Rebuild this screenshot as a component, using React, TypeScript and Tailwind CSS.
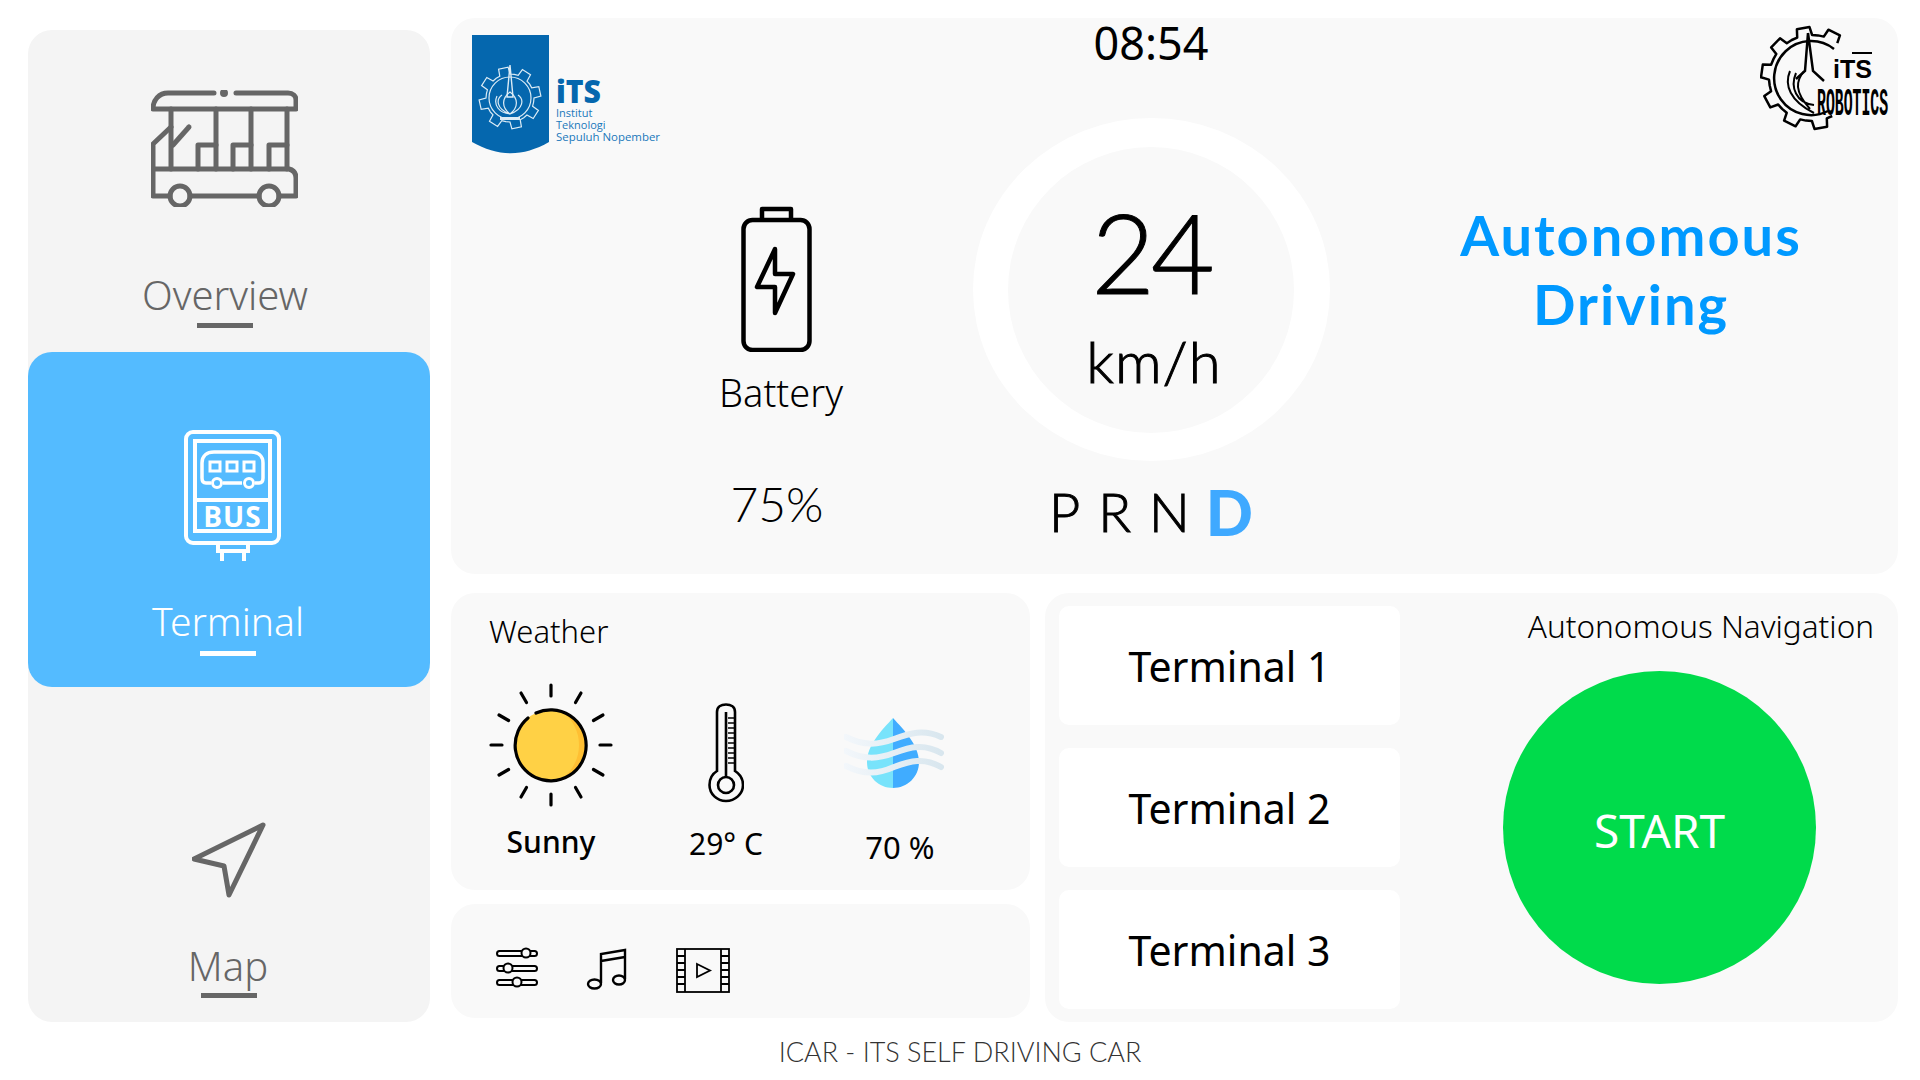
import type { ReactNode } from 'react'

// polar outline of a cog, used by both ITS logos
function gearPath(cx: number, cy: number, rIn: number, rOut: number, teeth: number, start = 0, end = 360) {
  const pts: string[] = []
  const step = 360 / teeth
  for (let a = start; a < end - 0.01; a += step) {
    const angles: [number, number][] = [
      [a, rIn],
      [a + step * 0.22, rIn],
      [a + step * 0.3, rOut],
      [a + step * 0.7, rOut],
      [a + step * 0.78, rIn],
    ]
    angles.forEach(([deg, r]) => {
      const t = (deg * Math.PI) / 180
      pts.push(`${(cx + r * Math.cos(t)).toFixed(1)} ${(cy + r * Math.sin(t)).toFixed(1)}`)
    })
  }
  return 'M' + pts.join('L')
}

function BusIcon() {
  return (
    <svg width="147" height="117" viewBox="0 0 147 117" fill="none" stroke="#666" strokeWidth="5" strokeLinecap="round" strokeLinejoin="round">
      <path d="M63 3H17C8 3 2 10 2 19H145V10C145 6 142 3 137 3H85" />
      <circle cx="73" cy="3" r="1.5" fill="#666" />
      <path d="M20 19V79M65 19V79M100 19V79M136 19V79" />
      <path d="M20 37L2 54V106H19M39 106H108M128 106H145V88C145 83 142 80 138 79H2" />
      <path d="M22 55L38 37" />
      <path d="M47 79V55H65M82 79V55H100M118 79V55H136" />
      <circle cx="29" cy="106" r="10" />
      <circle cx="118" cy="106" r="10" />
    </svg>
  )
}

function BusStopIcon() {
  return (
    <svg width="97" height="132" viewBox="0 0 97 132" fill="none" stroke="#fff" strokeWidth="4">
      <rect x="2" y="2" width="93" height="111" rx="7" />
      <rect x="11" y="11" width="75" height="90" />
      <path d="M11 70H86" />
      <path d="M34 113V121H64V113M38 121V131M60 121V131" />
      <path d="M27 53H22C19 53 18 51 18 48V33C18 26 23 22 30 22H67C74 22 79 26 79 33V48C79 51 78 53 75 53H71M39 53H58" strokeWidth="3.5" />
      <rect x="26" y="32" width="10" height="9" strokeWidth="3" />
      <rect x="43" y="32" width="10" height="9" strokeWidth="3" />
      <rect x="60" y="32" width="10" height="9" strokeWidth="3" />
      <circle cx="33" cy="53" r="4.5" strokeWidth="3" />
      <circle cx="65" cy="53" r="4.5" strokeWidth="3" />
      <text x="48.5" y="97" textAnchor="middle" fontSize="28" fontWeight="700" fontFamily="Open Sans, sans-serif" fill="#fff" stroke="none" letterSpacing="1">BUS</text>
    </svg>
  )
}

function MapIcon() {
  return (
    <svg width="75" height="76" viewBox="0 0 75 76" fill="none" stroke="#666" strokeWidth="5" strokeLinejoin="round">
      <path d="M71 3L2 37L32 44L37 73Z" />
    </svg>
  )
}

function BatteryIcon() {
  return (
    <svg width="71" height="146" viewBox="0 0 71 146" fill="none" stroke="#000" strokeWidth="4.5" strokeLinejoin="round">
      <rect x="2.5" y="14" width="66" height="130" rx="9" />
      <path d="M21 14V3H50V14" />
      <path d="M34 43L16 81H34V107L52 68H34Z" />
    </svg>
  )
}

function ItsLogo() {
  return (
    <svg width="195" height="120" viewBox="0 0 195 120">
      <path d="M1 0H78V107C52 122 27 122 1 107Z" fill="#0567ae" />
      <path d={gearPath(39, 63, 24, 31, 8, 10) + 'Z'} fill="none" stroke="#dcecf6" strokeWidth="1.2" />
      <circle cx="39" cy="63" r="21" fill="none" stroke="#dcecf6" strokeWidth="1.2" />
      <path d="M39 30L36 62H42Z" fill="none" stroke="#dcecf6" strokeWidth="1.4" />
      <path d="M39 57C31 63 30 72 39 79C48 72 47 63 39 57ZM31 60C25 64 25 74 39 79C53 74 53 64 47 60M26 61C22 70 28 78 39 79" fill="none" stroke="#dcecf6" strokeWidth="1.2" />
      <path d="M29 82H49V85H29Z" fill="#dcecf6" />
      <text x="85" y="68" fontSize="31" fontWeight="800" fontFamily="Open Sans, sans-serif" fill="#0567ae" textLength="45" lengthAdjust="spacingAndGlyphs">iTS</text>
      <text x="85" y="82" fontSize="11" fontFamily="Open Sans, sans-serif" fill="#1a78bb">Institut</text>
      <text x="85" y="94" fontSize="11" fontFamily="Open Sans, sans-serif" fill="#1a78bb">Teknologi</text>
      <text x="85" y="106" fontSize="11" fontFamily="Open Sans, sans-serif" fill="#1a78bb" textLength="104" lengthAdjust="spacingAndGlyphs">Sepuluh Nopember</text>
    </svg>
  )
}

function RoboticsLogo() {
  return (
    <svg width="130" height="108" viewBox="0 0 130 108" fill="none" stroke="#000">
      <path d={gearPath(52, 53, 43, 51, 10, 62, 310)} strokeWidth="2.5" strokeLinejoin="round" />
      <path d="M74 24A37 37 0 1 0 68 86" strokeWidth="2.5" />
      <path d="M48 8L45 46L36 54M48 8L53 46L64 56" strokeWidth="2.5" />
      <path d="M44 46C36 56 34 66 50 84M30 46C24 60 30 76 54 88M36 48C30 62 36 78 54 80" strokeWidth="2" />
      <path d="M92 28H112" strokeWidth="2" />
      <text x="73" y="53" fontSize="25" fontWeight="800" fontFamily="Liberation Sans, sans-serif" fill="#000" stroke="none" textLength="39" lengthAdjust="spacingAndGlyphs">iTS</text>
      <text transform="translate(57 90) scale(0.39 1)" fontSize="38" fontWeight="700" fontFamily="Liberation Mono, monospace" fill="#000" stroke="none">ROBOTICS</text>
    </svg>
  )
}

function SunIcon() {
  const rays = [0, 30, 60, 90, 120, 150, 180, 210, 240, 270, 300, 330]
  return (
    <svg width="124" height="124" viewBox="0 0 124 124" fill="none">
      <circle cx="62" cy="62" r="35.5" fill="#ffd145" />
      <path d="M74 29A35.5 35.5 0 0 1 74 95A42 42 0 0 0 74 29Z" fill="#ffbf33" />
      <path d="M39 35A35.5 35.5 0 1 0 47 30" stroke="#000" strokeWidth="3.2" strokeLinecap="round" />
      {rays.map((r) => (
        <path key={r} d="M62 2V13" stroke="#000" strokeWidth="3.2" strokeLinecap="round" transform={`rotate(${r} 62 62)`} />
      ))}
    </svg>
  )
}

function ThermoIcon() {
  return (
    <svg width="36" height="100" viewBox="0 0 36 100" fill="none" stroke="#000" strokeWidth="2.6">
      <path d="M9 68V9C9 4 13 1.5 18 1.5C23 1.5 27 4 27 9V68C32 71 35 76 35 82C35 91 27 98 18 98C9 98 1.5 91 1.5 82C1.5 76 4 71 9 68Z" />
      <circle cx="18" cy="82" r="8" />
      <path d="M18 74V9" strokeWidth="2.6" />
      <path d="M20 15H26M20 20H26M20 25H26M20 30H26M20 35H26M20 40H26M20 45H26M20 50H26M20 55H26M20 60H26" strokeWidth="1.6" />
    </svg>
  )
}

function HumidityIcon() {
  return (
    <svg width="100" height="72" viewBox="0 0 100 72" fill="none">
      <path d="M49 1C38 13 23 28 23 45C23 60 35 71 49 71Z" fill="#78e3fb" />
      <path d="M49 1C60 13 75 28 75 45C75 60 63 71 49 71Z" fill="#40acff" />
      <path d="M2 20C20 29 34 28 50 22C66 16 80 12 97 20M2 34C20 43 34 42 50 36C66 30 80 26 97 36M2 49C20 58 34 57 50 50C66 44 80 40 97 50" stroke="url(#wave)" strokeWidth="6" strokeLinecap="round" />
      <defs>
        <linearGradient id="wave" x1="0" y1="0" x2="100" y2="0" gradientUnits="userSpaceOnUse">
          <stop offset="0" stopColor="#f3f7fb" />
          <stop offset="1" stopColor="#d8e6ee" />
        </linearGradient>
      </defs>
    </svg>
  )
}

function SlidersIcon() {
  return (
    <svg width="42" height="42" viewBox="0 0 42 42" fill="#f9f9f9" stroke="#000" strokeWidth="2">
      <rect x="1" y="5" width="40" height="5" rx="2.5" />
      <rect x="1" y="20" width="40" height="5" rx="2.5" />
      <rect x="1" y="34" width="40" height="5" rx="2.5" />
      <circle cx="30" cy="7" r="4.5" />
      <circle cx="12" cy="22" r="4.5" />
      <circle cx="21" cy="36" r="4.5" />
    </svg>
  )
}

function MusicIcon() {
  return (
    <svg width="42" height="42" viewBox="0 0 42 42" fill="none" stroke="#000" strokeWidth="2.4">
      <path d="M15 35V6L39 2V31M15 13L39 9" />
      <ellipse cx="8.5" cy="36" rx="6.5" ry="4.5" />
      <ellipse cx="33" cy="32" rx="6" ry="4.5" />
    </svg>
  )
}

function VideoIcon() {
  return (
    <svg width="54" height="45" viewBox="0 0 54 45" fill="none" stroke="#000" strokeWidth="1.8">
      <rect x="1" y="1" width="52" height="43" />
      <path d="M9 1V44M45 1V44" />
      <path d="M1 8H9M1 15H9M1 22H9M1 29H9M1 36H9M45 8H53M45 15H53M45 22H53M45 29H53M45 36H53" />
      <path d="M21 16L34 22.5L21 29Z" />
    </svg>
  )
}

type NavItemProps = {
  icon: ReactNode
  label: string
  className: string
  iconClass: string
  labelClass: string
  barClass: string
}

function NavItem({ icon, label, className, iconClass, labelClass, barClass }: NavItemProps) {
  return (
    <div className={`flex flex-col items-center w-full rounded-[24px] ${className}`}>
      <div className={iconClass}>{icon}</div>
      <div className={`leading-[48px] ${labelClass}`}>{label}</div>
      <div className={`h-[5px] w-[56px] ${barClass}`} />
    </div>
  )
}

export default function App() {
  return (
    <div className="w-[1920px] h-[1080px] bg-white overflow-hidden text-black font-['Noto_Sans',sans-serif]">
      <div className="flex items-start h-[1022px] pl-[28px]">
        {/* sidebar */}
        <div className="mt-[30px] w-[402px] h-[992px] rounded-[24px] bg-[#f4f4f4] flex flex-col">
          <NavItem
            icon={<BusIcon />}
            label="Overview"
            className="h-[322px] text-[#666]"
            iconClass="mt-[60px] mb-[64px] -ml-[10px]"
            labelClass="-ml-[8px] text-[40px] font-light"
            barClass="bg-[#666] mt-[4px] -ml-[8px]"
          />
          <NavItem
            icon={<BusStopIcon />}
            label="Terminal"
            className="h-[335px] bg-[#54bbff] text-white"
            iconClass="mt-[78px] mb-[35px] ml-[6px]"
            labelClass="-ml-[2px] text-[39px] font-light"
            barClass="bg-white mt-[6px] -ml-[2px]"
          />
          <NavItem
            icon={<MapIcon />}
            label="Map"
            className="h-[335px] text-[#666]"
            iconClass="mt-[135px] mb-[44px]"
            labelClass="-ml-[2px] text-[40px] font-light"
            barClass="bg-[#666] mt-[3px]"
          />
        </div>

        <div className="ml-[21px] mt-[18px] w-[1447px] flex flex-col">
          {/* top panel */}
          <div className="relative h-[556px] rounded-[24px] bg-[#f9f9f9] flex">
            <div className="absolute left-[20px] top-[17px]">
              <ItsLogo />
            </div>
            <div className="absolute right-[8px] top-[7px]">
              <RoboticsLogo />
            </div>

            <div className="ml-[226px] w-[200px] flex flex-col items-center">
              <div className="mt-[188px] -ml-[2px]">
                <BatteryIcon />
              </div>
              <div className="mt-[15px] ml-[8px] text-[38px] leading-[50px] font-light">Battery</div>
              <div className="mt-[57px] text-[48px] leading-[60px] font-light font-['Lato',sans-serif]">75%</div>
            </div>

            <div className="ml-[74px] w-[400px] flex flex-col items-center">
              <div className="-mt-[5px] h-[60px] text-[45px] leading-[60px]">08:54</div>
              <div className="mt-[45px] w-[357px] h-[343px] rounded-[50%] bg-white flex items-center justify-center">
                <div className="w-[286px] h-[286px] rounded-full bg-[#f9f9f9] flex flex-col items-center font-['Lato',sans-serif] font-light [-webkit-text-stroke:1px_black]">
                  <div className="mt-[44px] text-[110px] leading-[120px] tracking-[-4px]">24</div>
                  <div className="mt-[18px] ml-[6px] text-[58px] leading-[64px] tracking-[1px]">km/h</div>
                </div>
              </div>
              <div className="mt-[18px] flex items-end gap-[18px] font-['Lato',sans-serif] font-light text-[54px] leading-[66px] [-webkit-text-stroke:1px_black]">
                <span>P</span>
                <span>R</span>
                <span>N</span>
                <span className="text-[#3fa9ff] font-black text-[62px] -ml-[2px] [-webkit-text-stroke:0]">D</span>
              </div>
            </div>

            <div className="ml-[30px] w-[500px] pt-[182px] text-center text-[#0099ff] text-[56px] leading-[69px] tracking-[2px] font-bold font-['Lato',sans-serif]">
              Autonomous
              <br />
              Driving
            </div>
          </div>

          <div className="mt-[19px] flex gap-[15px]">
            <div className="w-[579px] flex flex-col">
              {/* weather */}
              <div className="h-[297px] rounded-[24px] bg-[#f9f9f9] pl-[12px]">
                <div className="pl-[26px] pt-[16px] text-[31px] leading-[44px] font-light">Weather</div>
                <div className="mt-[30px] flex">
                  <div className="w-[176px] flex flex-col items-center">
                    <SunIcon />
                    <div className="mt-[14px] text-[30px] leading-[42px] font-medium">Sunny</div>
                  </div>
                  <div className="w-[174px] flex flex-col items-center">
                    <div className="mt-[20px]">
                      <ThermoIcon />
                    </div>
                    <div className="mt-[20px] text-[30px] leading-[42px]">29° C</div>
                  </div>
                  <div className="w-[174px] flex flex-col items-center">
                    <div className="mt-[34px] -ml-[12px]">
                      <HumidityIcon />
                    </div>
                    <div className="mt-[37px] text-[31px] leading-[42px]">70 %</div>
                  </div>
                </div>
              </div>
              {/* media buttons */}
              <div className="mt-[14px] h-[114px] rounded-[24px] bg-[#f9f9f9] flex items-center pl-[45px] pt-[12px]">
                <SlidersIcon />
                <div className="ml-[48px] mt-[3px]">
                  <MusicIcon />
                </div>
                <div className="ml-[48px] mt-[6px]">
                  <VideoIcon />
                </div>
              </div>
            </div>

            {/* navigation */}
            <div className="w-[853px] h-[429px] rounded-[24px] bg-[#f9f9f9] flex pl-[14px] pt-[13px]">
              <div className="w-[341px] flex flex-col gap-[23px]">
                {['Terminal 1', 'Terminal 2', 'Terminal 3'].map((t) => (
                  <div key={t} className="h-[119px] rounded-[10px] bg-white flex items-center justify-center pt-[3px] text-[41px]">
                    {t}
                  </div>
                ))}
              </div>
              <div className="flex-1 flex flex-col">
                <div className="text-right pr-[24px] text-[31.5px] leading-[40px] font-light">Autonomous Navigation</div>
                <div className="mt-[25px] ml-[103px] w-[313px] h-[313px] rounded-full bg-[#00db4b] flex items-center justify-center pt-[6px] text-white text-[46px]">
                  START
                </div>
              </div>
            </div>
          </div>
        </div>
      </div>

      <div className="pt-[14px] text-center text-[27px] leading-[32px] font-light text-[#333] font-['Lato',sans-serif]">
        ICAR - ITS SELF DRIVING CAR
      </div>
    </div>
  )
}
